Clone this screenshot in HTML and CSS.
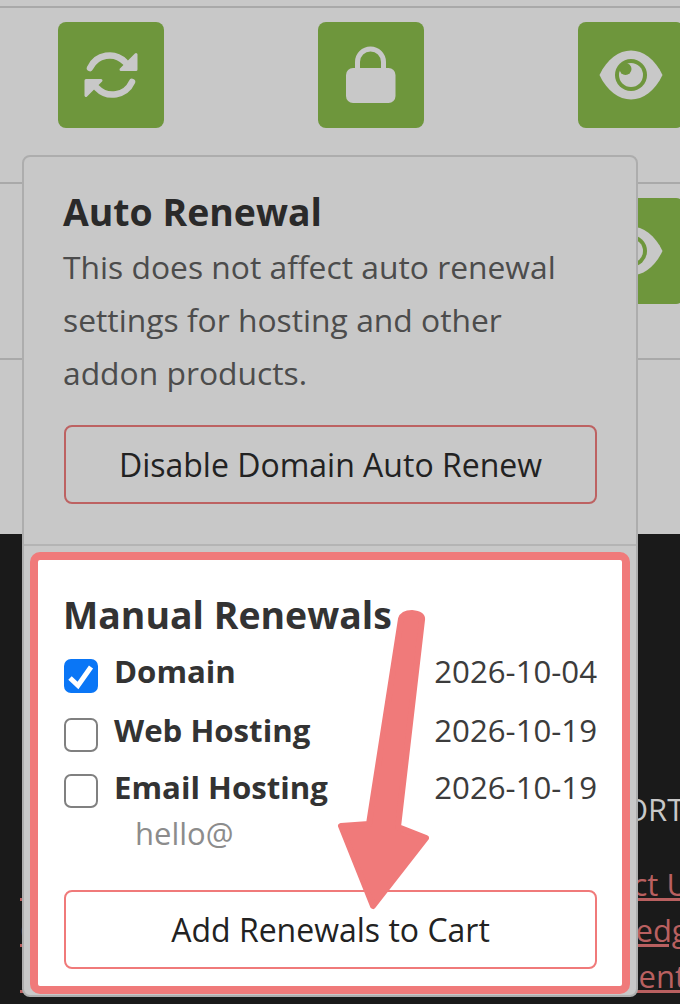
FILE: index.html
```html
<!DOCTYPE html>
<html lang="en">
<head>
<meta charset="utf-8">
<title>Domains</title>
<link rel="stylesheet" href="styles.css">
</head>
<body>
<div class="page">
  <main class="table">
    <div class="row">
      <a class="tile"><svg viewBox="0 0 64 64" class="icon"><g class="sync"><path class="sync-arc" d="M11 25A21.500 21.500 0 0 1 46 19"/><path class="sync-head" d="M57 11.500V26.500H42Z"/></g><g class="sync" transform="rotate(180 32 32)"><path class="sync-arc" d="M11 25A21.500 21.500 0 0 1 46 19"/><path class="sync-head" d="M57 11.500V26.500H42Z"/></g></svg></a>
      <a class="tile"><svg viewBox="0 0 64 64" class="icon"><path class="shackle" d="M18.500 27V19a13 13 0 0 1 26 0V27"/><rect class="lock-body" x="7" y="25" width="49.500" height="35" rx="7"/></svg></a>
      <a class="tile"><svg viewBox="0 0 64 64" class="icon"><path class="eye" d="M.5 32C8 16 20 7.500 32 7.500S56 16 63.500 32C56 48 44 56.500 32 56.500S8 48 .5 32Z"/><circle class="eye-ring" cx="32" cy="32" r="16"/><circle class="eye" cx="32" cy="32" r="12"/><circle class="eye-ring" cx="26.500" cy="26" r="6"/></svg></a>
    </div>
    <div class="row">
      <a class="tile"></a>
      <a class="tile"></a>
      <a class="tile"><svg viewBox="0 0 64 64" class="icon"><path class="eye" d="M.5 32C8 16 20 7.500 32 7.500S56 16 63.500 32C56 48 44 56.500 32 56.500S8 48 .5 32Z"/><circle class="eye-ring" cx="32" cy="32" r="16"/><circle class="eye" cx="32" cy="32" r="12"/><circle class="eye-ring" cx="26.500" cy="26" r="6"/></svg></a>
    </div>
    <div class="row row-last"></div>
  </main>

  <footer class="footer">
    <div class="col col-left">
      <h4 class="col-title">LEGAL</h4>
      <a class="link">Help Center</a>
      <a class="link">Cookie Policy</a>
      <a class="link">Privacy Policy</a>
    </div>
    <div class="col col-right">
      <h4 class="col-title">SUPPORT</h4>
      <a class="link">Contact Us</a>
      <a class="link">Knowledge</a>
      <a class="link">Shipment</a>
    </div>
  </footer>

  <aside class="popover">
    <section class="auto">
      <h3 class="auto-title">Auto Renewal</h3>
      <p class="auto-text">This does not affect auto renewal settings for hosting and other addon products.</p>
      <button class="btn btn-muted">Disable Domain Auto Renew</button>
    </section>
    <section class="manual">
      <h3 class="manual-title">Manual Renewals</h3>
      <div class="item item-first">
        <span class="check check-on"><svg viewBox="0 0 34 34" class="tick"><path d="M6 19l8 7.500L27 8"/></svg></span>
        <strong class="item-name">Domain</strong>
        <span class="item-date">2026-10-04</span>
      </div>
      <div class="item">
        <span class="check"></span>
        <strong class="item-name">Web Hosting</strong>
        <span class="item-date">2026-10-19</span>
      </div>
      <div class="item item-last">
        <span class="check"></span>
        <strong class="item-name">Email Hosting</strong>
        <span class="item-date">2026-10-19</span>
      </div>
      <div class="item-sub">hello@</div>
      <button class="btn btn-red">Add Renewals to Cart</button>
    </section>
  </aside>

  <svg class="arrow" viewBox="330 600 110 315"><path d="M401 619Q403 613 412 613Q423 614 422 620L398 827L426 838L373 906L341 826L369 824Z"/></svg>
</div>
</body>
</html>
```

FILE: styles.css
```css
* { box-sizing: border-box; }

html, body {
  margin: 0;
  height: 1004px;
  overflow: hidden;
}

body {
  background: #c8c8c8;
  color: #222;
  font-family: "Open Sans", "Noto Sans", sans-serif;
}

.page {
  position: relative;
  height: 1004px;
  overflow: hidden;
  padding-top: 6px;
}

.row {
  display: flex;
  gap: 154px;
  height: 176px;
  padding: 14px 0 0 58px;
  border-top: 2px solid #a9a9a9;
}

.tile {
  display: flex;
  flex: none;
  align-items: center;
  justify-content: center;
  width: 106px;
  height: 106px;
  border-radius: 8px;
  background: #6e963c;
}

.icon { width: 64px; height: 64px; }

.sync-arc {
  fill: none;
  stroke: #c8c8c8;
  stroke-width: 6.500;
  stroke-linecap: round;
}

.sync-head {
  fill: #c8c8c8;
  stroke: #c8c8c8;
  stroke-width: 3;
  stroke-linejoin: round;
}

.shackle {
  fill: none;
  stroke: #c8c8c8;
  stroke-width: 5;
}

.lock-body, .eye { fill: #c8c8c8; }
.eye-ring { fill: #6e963c; }

.footer {
  display: flex;
  height: 470px;
  padding: 252px 0 0 20px;
  background: #1a1a1a;
  color: #c8c8c8;
}

.col {
  display: flex;
  flex: none;
  flex-direction: column;
  align-items: flex-start;
  font-size: 31px;
  line-height: 46px;
  white-space: nowrap;
}

.col-left { width: 527px; }

.col-title {
  margin: 0 0 29px;
  font-size: 31px;
  font-weight: 400;
  line-height: 46px;
}

.link {
  color: #b96060;
  text-decoration: underline;
}

.popover {
  position: absolute;
  top: 155px;
  left: 22px;
  width: 616px;
  height: 842px;
  border: 2px solid #adadad;
  border-radius: 8px;
  background: #c8c8c8;
}

.auto {
  height: 389px;
  padding: 30px 39px 0;
  border-bottom: 2px solid #b4b4b4;
}

.auto-title {
  margin: 0 0 3px;
  font-size: 37.400px;
  font-weight: 700;
  line-height: 50px;
  color: #2a2a2a;
}

.auto-text {
  margin: 0 0 26px;
  font-size: 31.800px;
  line-height: 53px;
  color: #4c4c4c;
}

.btn {
  display: block;
  width: calc(100% - 1px);
  height: 79px;
  margin-left: 1px;
  border: 2px solid;
  border-radius: 8px;
  background: transparent;
  color: #222;
  font: 400 32px/1 "Open Sans", "Noto Sans", sans-serif;
}

.btn-muted { border-color: #bd6262; }
.btn-red { border-color: #f07a7a; }

.manual {
  height: 442px;
  margin: 6px 6px 0;
  padding: 30px 25px 0;
  border: 8px solid #f07a7a;
  border-radius: 10px;
  background: #fff;
}

.manual-title {
  margin: 0 0 19px;
  font-size: 37.400px;
  font-weight: 700;
  line-height: 50px;
  color: #333;
}

.item {
  display: flex;
  align-items: flex-start;
  height: 56px;
}

.item-first { height: 59px; }
.item-last { height: 36px; }

.check {
  display: block;
  flex: none;
  width: 34px;
  height: 34px;
  margin-left: 1px;
  border: 2.500px solid #808080;
  border-radius: 7px;
  background: #fff;
}

.check-on {
  border: 0;
  background: #0a76f6;
}

.tick {
  display: block;
  width: 34px;
  height: 34px;
}

.tick path {
  fill: none;
  stroke: #fff;
  stroke-width: 5;
}

.item-name {
  margin: -9px 0 0 16px;
  font-size: 31.200px;
  font-weight: 700;
  line-height: 42px;
  color: #333;
}

.item-date {
  margin: -9px 0 0 auto;
  font-size: 31.200px;
  line-height: 42px;
  color: #3c3c3c;
}

.item-last .item-name,
.item-last .item-date { margin-top: -8px; }

.item-sub {
  margin: 0 0 34px;
  padding-left: 72px;
  font-size: 31px;
  line-height: 46px;
  color: #8c8c8c;
}

.arrow {
  position: absolute;
  top: 600px;
  left: 330px;
  width: 110px;
  height: 315px;
  pointer-events: none;
}

.arrow path {
  fill: #f07a7a;
  stroke: #f07a7a;
  stroke-width: 6;
  stroke-linejoin: round;
}
```
